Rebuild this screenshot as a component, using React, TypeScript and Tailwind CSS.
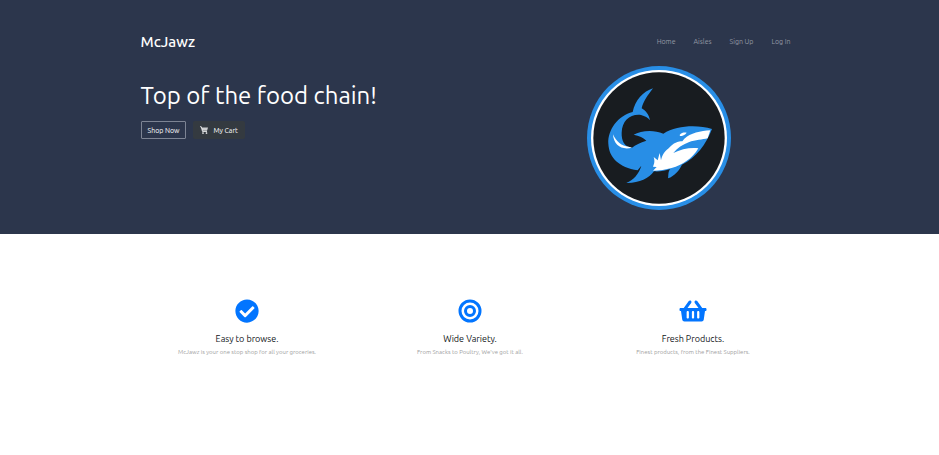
import React from "react";
import { FaCheckCircle, FaShoppingBasket } from "react-icons/fa";

const links = ["Home", "Aisles", "Sign Up", "Log In"];

function Shark() {
  return (
    <svg viewBox="21 17 432 432" className="h-36 w-36" role="img" aria-label="McJawz shark">
      <circle cx="237" cy="233" r="216" fill="#288ee6" />
      <circle cx="237" cy="233" r="204" fill="#fff" />
      <circle cx="237" cy="233" r="197" fill="#181c20" />
      <path
        fill="#288ee6"
        d="M219 84C190 93 165 120 158 155C115 166 83 207 85 250C87 292 117 321 173 330L184 316C177 341 160 359 139 368C176 369 207 354 222 333C238 334 255 332 271 326C263 334 266 346 264 354C284 347 298 330 306 313C349 292 378 252 396 206C354 193 291 194 250 220C220 207 182 211 161 223C177 226 191 232 199 241C181 246 166 254 156 262C133 260 124 240 125 217C126 181 151 160 183 164C195 167 204 172 210 180C207 163 197 151 185 144C190 122 204 104 219 84Z"
      />
      <path fill="#fff" d="M99 222C109 245 125 257 146 259L156 262C126 270 101 256 99 222Z" />
      <path
        fill="#fff"
        d="M391 210C362 211 331 219 313 235L307 243C293 240 274 253 266 264C250 277 246 287 243 300L239 278L233 300L221 290C226 304 221 314 219 319L230 320L219 331C258 331 296 320 318 303C335 292 346 280 355 264C330 261 302 267 280 278C292 263 308 253 326 246C347 238 367 238 383 234Z"
      />
      <path fill="#fff" d="M299 224C304 217 312 216 320 217C316 224 307 227 300 227Z" />
    </svg>
  );
}

function Cart() {
  return (
    <svg viewBox="0 0 16 16" className="h-2 w-2" aria-hidden="true">
      <path d="M0 1.5h2.6L5 11h9" fill="none" stroke="currentColor" strokeWidth="1.6" />
      <path d="M3 3h13l-2 6.5H4.8z" fill="currentColor" fillOpacity="0.75" />
      <circle cx="6" cy="14" r="1.7" fill="currentColor" />
      <circle cx="13" cy="14" r="1.7" fill="currentColor" />
    </svg>
  );
}

function Rings() {
  return (
    <svg viewBox="0 0 24 24" className="h-6 w-6" fill="none" stroke="currentColor" strokeWidth="3" aria-hidden="true">
      <circle cx="12" cy="12" r="10" />
      <circle cx="12" cy="12" r="4.5" />
    </svg>
  );
}

const features = [
  { title: "Easy to browse.", text: "McJawz is your one stop shop for all your groceries.", icon: <FaCheckCircle className="h-6 w-6" /> },
  { title: "Wide Variety.", text: "From Snacks to Poultry, We've got it all.", icon: <Rings /> },
  { title: "Fresh Products.", text: "Finest products, from the Finest Suppliers.", icon: <FaShoppingBasket className="h-6 w-7" /> },
];

export default function App() {
  return (
    <div className="min-h-screen bg-white font-['Ubuntu','Noto_Sans',sans-serif]">
      <header className="bg-[#2c364c] pt-7 pb-6 text-white">
        <div className="mx-auto max-w-[670px] pr-[5px] pl-[6px]">
          <nav className="flex h-7 items-center justify-between">
            <a href="#" className="text-[15px] leading-7 font-medium">McJawz</a>
            <ul className="flex gap-[18px] pr-[9px] pb-[2px] text-[7px] text-[#9499a5]">
              {links.map((l) => (
                <li key={l}><a href="#">{l}</a></li>
              ))}
            </ul>
          </nav>
          <div className="flex flex-wrap pt-[10px]">
            <div className="flex-1 pt-3">
              <h1 className="text-[24px] leading-9 whitespace-nowrap">Top of the food chain!</h1>
              <div className="flex gap-[7px] pt-[7px] text-[7px]">
                <button className="h-[18px] rounded-[1px] border border-[#7d8494] px-[6px]">Shop Now</button>
                <button className="flex h-[18px] items-center gap-[5px] rounded-[2px] bg-[#343a40] px-[7px]">
                  <Cart />
                  My Cart
                </button>
              </div>
            </div>
            <div className="flex w-[281px] justify-center">
              <Shark />
            </div>
          </div>
        </div>
      </header>
      <main className="mx-auto grid max-w-[670px] grid-cols-3 pt-16 pl-px text-center">
        {features.map((f) => (
          <section key={f.title} className="flex flex-col items-center">
            <div className="pt-px text-[#0275ff]">{f.icon}</div>
            <h2 className="pt-[9px] text-[9px] leading-[15px] text-[#101418]">{f.title}</h2>
            <p className="text-[6px] leading-[10px] text-[#a0a0a0]">{f.text}</p>
          </section>
        ))}
      </main>
    </div>
  );
}
